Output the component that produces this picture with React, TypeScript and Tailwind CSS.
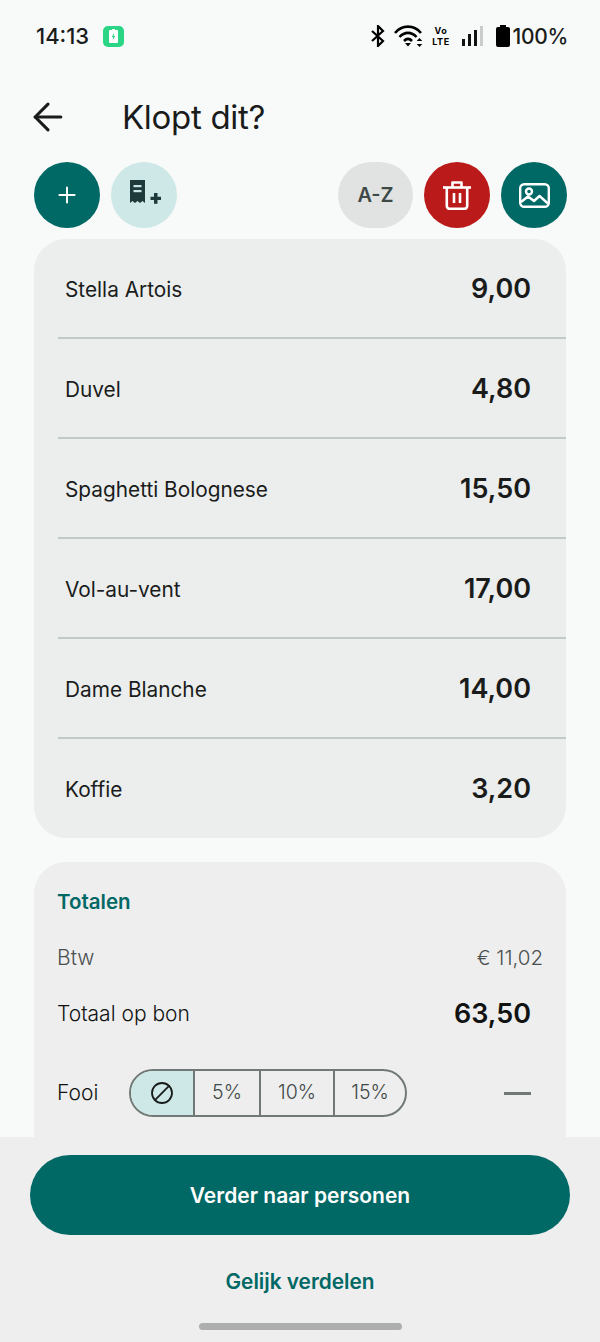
import React from "react";
import { ArrowLeft, Plus, Ban } from "lucide-react";

const items = [
  { name: "Stella Artois", price: "9,00" },
  { name: "Duvel", price: "4,80" },
  { name: "Spaghetti Bolognese", price: "15,50" },
  { name: "Vol-au-vent", price: "17,00" },
  { name: "Dame Blanche", price: "14,00" },
  { name: "Koffie", price: "3,20" },
];

function StatusBar() {
  return (
    <div className="h-[72px] flex items-center justify-between pl-[36px] pr-[32px] text-[#1a1c1c]">
      <div className="flex items-center gap-[14px]">
        <span className="text-[22px] font-medium leading-none">14:13</span>
        <div className="w-[21px] h-[21px] rounded-[5px] bg-[#2ad586] flex items-center justify-center">
          <svg width="9" height="14" viewBox="0 0 9 14">
            <path d="M3 0h3v1h2a1 1 0 0 1 1 1v11a1 1 0 0 1-1 1H1a1 1 0 0 1-1-1V2a1 1 0 0 1 1-1h2z" fill="#fff" />
            <path d="M5 4 2.800 8H4.200L3.800 11 6.200 7H4.800z" fill="#2ad586" />
          </svg>
        </div>
      </div>
      <div className="flex items-center">
        <svg width="14" height="22" viewBox="0 0 14 22" fill="none" stroke="#000" strokeWidth="2.200" className="mr-[9px]">
          <path d="M1 6l11 10-5 5V1l5 5L1 16" />
        </svg>
        <svg width="30" height="22" viewBox="0 0 30 22" fill="none" stroke="#000" className="mr-[8px]">
          <path d="M1 8C8-.5 20-.5 27 8" strokeWidth="2.600" />
          <path d="M5.500 12c5-5.500 12-5.500 17 0" strokeWidth="2.600" />
          <path d="M10 16c2.700-2.800 5.300-2.800 8 0" strokeWidth="2.600" />
          <path d="M11 18h6l-3 3.500z" fill="#000" stroke="none" />
          <path d="M25.500 13l2.800 3h-5.600zM25.500 22l2.800-3h-5.600z" fill="#000" stroke="none" />
        </svg>
        <div className="w-[19px] mr-[11px] flex flex-col items-center text-[9px] font-bold leading-[11px] tracking-[0.6px] text-black">
          <span>Vo</span>
          <span>LTE</span>
        </div>
        <div className="flex items-end gap-[3px] h-[20px] mr-[13px]">
          <div className="w-[3px] h-[7px] bg-[#111]" />
          <div className="w-[3px] h-[12px] bg-[#111]" />
          <div className="w-[3px] h-[16px] bg-[#111]" />
          <div className="w-[3px] h-[20px] bg-[#c9cccc]" />
        </div>
        <svg width="14" height="22" viewBox="0 0 14 22" className="mr-[3px]">
          <path d="M4 0h6v2h2a2 2 0 0 1 2 2v16a2 2 0 0 1-2 2H2a2 2 0 0 1-2-2V4a2 2 0 0 1 2-2h2z" fill="#000" />
        </svg>
        <span className="text-[21px] leading-none font-medium tracking-[-0.3px]">100%</span>
      </div>
    </div>
  );
}

function ReceiptPlusIcon() {
  return (
    <svg width="31" height="24" viewBox="0 0 31 24" fill="#1f3a3a" className="ml-[3px] mb-[6px]">
      <path d="M0 0h15v23l-2.500-2-2.500 2-2.500-2-2.500 2-2.500-2L0 23z" />
      <rect x="3.500" y="5" width="8" height="2.200" fill="#c9e5e4" />
      <rect x="3.500" y="10" width="8" height="2.200" fill="#c9e5e4" />
      <path d="M24 13h3.500v3.700H31v3.300h-3.500v3.700H24V20h-3.500v-3.300H24z" />
    </svg>
  );
}

function TrashIcon() {
  return (
    <svg width="28" height="29" viewBox="0 0 28 29" fill="none" stroke="#fff" strokeWidth="2.600" strokeLinejoin="round">
      <path d="M0 6.500h28" />
      <path d="M9.500 6V1.500h9V6" />
      <path d="M3.800 6.500V25a2.800 2.800 0 0 0 2.800 2.800h14.800a2.800 2.800 0 0 0 2.800-2.800V6.500" />
      <path d="M11 12v10M17 12v10" />
    </svg>
  );
}

function ImageIcon() {
  return (
    <svg width="31" height="25" viewBox="0 0 31 25" fill="none" stroke="#fff" strokeWidth="2.400" strokeLinejoin="round">
      <rect x="1.200" y="1.200" width="28.600" height="22.600" rx="4" />
      <circle cx="10" cy="8.500" r="3" />
      <path d="M2 19l7-5.500 6 4.500 5.500-5 8.500 7.500" />
    </svg>
  );
}

function ItemRow({ name, price, last }: { name: string; price: string; last: boolean }) {
  return (
    <div className="h-[100px] pl-[24px] flex flex-col">
      <div className="h-[99px] flex items-center justify-between pl-[7px] pr-[35px] pt-[2px]">
        <span className="mt-[1px] text-[20.800px] text-[#1a1c1c]">{name}</span>
        <span className="text-[27px] font-semibold text-[#1a1c1c]">{price}</span>
      </div>
      {!last && <div className="h-[2px] bg-[#bfcbc8]" />}
    </div>
  );
}

export default function App() {
  return (
    <div
      className="w-[600px] h-[1342px] flex flex-col overflow-hidden bg-[#f8faf9]"
      style={{ fontFamily: "Inter, 'Noto Sans', sans-serif" }}
    >
      <div className="flex-1 min-h-0 overflow-hidden">
        <StatusBar />

        {/* Header */}
        <div className="h-[90px] pl-[26px] flex items-center">
          <ArrowLeft size={44} strokeWidth={1.700} className="text-[#1a1c1c]" />
          <h1 className="ml-[52px] text-[33px] leading-none tracking-[-0.3px] text-[#1a1c1c]">Klopt dit?</h1>
        </div>

        {/* Actions */}
        <div className="h-[66px] pl-[34px] pr-[33px] flex items-center">
          <button className="w-[66px] h-[66px] rounded-full bg-[#006865] flex items-center justify-center">
            <Plus size={26} strokeWidth={1.800} className="text-white" />
          </button>
          <button className="ml-[11px] w-[66px] h-[66px] rounded-full bg-[#cde8e6] flex items-center justify-center">
            <ReceiptPlusIcon />
          </button>
          <button className="ml-auto w-[75px] h-[66px] rounded-full bg-[#e1e3e3] text-[20px] font-semibold text-[#3f4948]">
            A-Z
          </button>
          <button className="ml-[11px] w-[66px] h-[66px] rounded-full bg-[#ba1a1a] flex items-center justify-center">
            <TrashIcon />
          </button>
          <button className="ml-[11px] w-[66px] h-[66px] rounded-full bg-[#006865] flex items-center justify-center">
            <ImageIcon />
          </button>
        </div>

        {/* Items */}
        <div className="mt-[11px] mx-[34px] h-[599px] rounded-[32px] bg-[#eceeed] overflow-hidden">
          {items.map((item, i) => (
            <ItemRow key={item.name} name={item.name} price={item.price} last={i === items.length - 1} />
          ))}
        </div>

        {/* Totals */}
        <div className="mt-[24px] mx-[34px] h-[400px] rounded-[32px] bg-[#eeeeee] px-[23px]">
          <div className="pt-[27px] text-[20.500px] leading-[26px] font-semibold text-[#006865]">Totalen</div>
          <div className="mt-[30px] h-[26px] flex items-center justify-between text-[#4a504f]">
            <span className="text-[21px] font-light">Btw</span>
            <span className="text-[20.500px] font-light">€ 11,02</span>
          </div>
          <div className="mt-[30px] h-[26px] flex items-center justify-between pr-[12px] text-[#111313]">
            <span className="text-[21px] font-light">Totaal op bon</span>
            <span className="text-[27px] font-semibold">63,50</span>
          </div>
          <div className="mt-[42px] h-[48px] flex items-center text-[#111313]">
            <span className="w-[72px] text-[21px] font-light">Fooi</span>
            <div className="flex h-[48px] w-[278px] rounded-full border-2 border-[#717977] overflow-hidden text-[19.500px] font-light text-[#3f4948]">
              <div className="w-[64px] bg-[#cde8e6] flex items-center justify-center border-r-2 border-[#717977]">
                <Ban size={24} strokeWidth={1.800} className="text-[#1a1c1c] -scale-x-100" />
              </div>
              <div className="w-[66px] flex items-center justify-center border-r-2 border-[#717977]">5%</div>
              <div className="w-[74px] flex items-center justify-center border-r-2 border-[#717977]">10%</div>
              <div className="flex-1 flex items-center justify-center">15%</div>
            </div>
            <div className="ml-auto mr-[12px] w-[27px] h-[3px] bg-[#717977]" />
          </div>
        </div>
      </div>

      {/* Bottom bar */}
      <div className="h-[205px] shrink-0 bg-[#eeeeee] px-[30px] pt-[18px] flex flex-col items-center">
        <button className="w-full h-[80px] pt-[2px] rounded-full bg-[#006865] text-white text-[21px] font-semibold">
          Verder naar personen
        </button>
        <button className="mt-[31px] h-[28px] text-[20.800px] font-semibold text-[#006865]">Gelijk verdelen</button>
        <div className="mt-[29px] w-[203px] h-[7px] rounded-full bg-[#adaeae]" />
      </div>
    </div>
  );
}
